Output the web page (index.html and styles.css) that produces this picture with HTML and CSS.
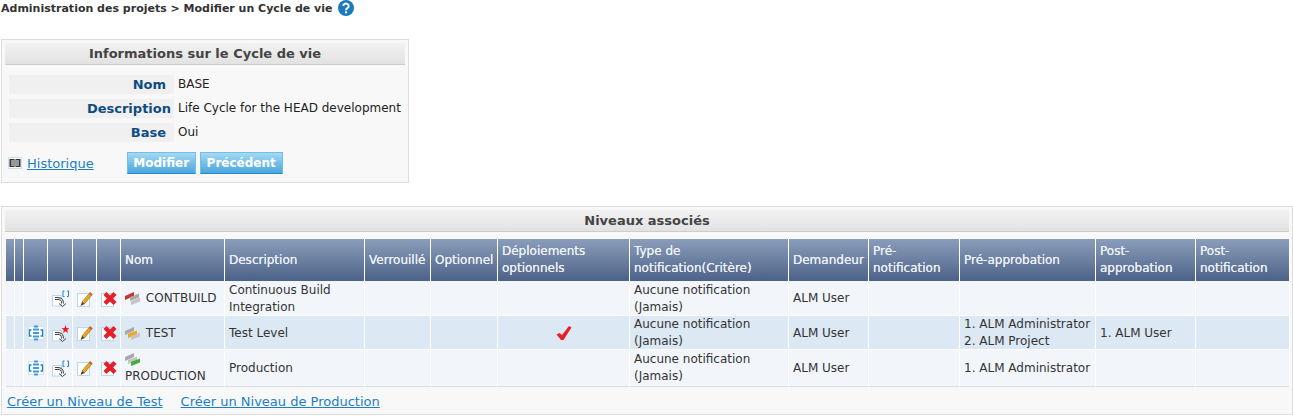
FILE: index.html
```html
<!DOCTYPE html>
<html>
  <head>
    <title>Modifier un Cycle de vie</title>
    <link rel="stylesheet" href="styles.css">
  </head>
  <body>

    <svg class="defs" width="0" height="0">
      <symbol id="page" viewBox="0 0 16 16">
        <rect x="0.5" y="2.5" width="12" height="13" fill="#fff" stroke="#bcd6ea"/>
      </symbol>
      <symbol id="arrow" viewBox="0 0 17 17">
        <rect x="0.5" y="5.500" width="9" height="10.500" fill="#fff" stroke="#bcd6ea"/>
        <path d="M3 8.500h3.500a4 4 0 0 1 4 4v1" fill="none" stroke="#444" stroke-width="2.800"/>
        <path d="M3 8.500h3.500a4 4 0 0 1 4 4v1.500" fill="none" stroke="#fff" stroke-width="1"/>
        <path d="M7 13.500 10.500 16.500 14 13.500" fill="none" stroke="#444" stroke-width="1"/>
      </symbol>
      <symbol id="move-open" viewBox="0 0 17 17">
        <use href="#arrow"/>
        <path d="M12.500 1h-1.500v5.500h1.500M15 1h1.500v5.500H15" fill="none" stroke="#1f83c6" stroke-width="1"/>
      </symbol>
      <symbol id="move-star" viewBox="0 0 17 17">
        <use href="#arrow"/>
        <path d="M13.500 0l1 3 3 .200-2.300 1.900.8 2.900-2.500-1.700L11 8l.8-2.900L9.500 3.200l3-.2z" fill="#ed1c24"/>
      </symbol>
      <symbol id="edit" viewBox="0 0 16 16">
        <use href="#page"/>
        <path d="M5 11 13 1.500l2.300 1.900-7.800 9.500z" fill="#e8a91c" stroke="#8f6414" stroke-width="0.6"/>
        <path d="M13 1.500l2.300 1.900-1.100 1.400-2.300-1.900z" fill="#d8553f"/>
        <path d="M5 11l2.500 1.900L3.500 15z" fill="#4a3b22"/>
      </symbol>
      <symbol id="delete" viewBox="0 0 16 16">
        <use href="#page"/>
        <path d="M4 2.500l10 10M14 2.500l-10 10" stroke="#e5202a" stroke-width="4.400" fill="none"/>
      </symbol>
      <symbol id="expand" viewBox="0 0 16 16">
        <rect x="0.500" y="1.500" width="15" height="13" fill="#fff" stroke="#d4e4f1"/>
        <path d="M3.500 5H1.500v6h2M12.500 5h2v6h-2" fill="none" stroke="#1f83c6" stroke-width="1.300"/>
        <path d="M6 1.500h4M5 4.500h6M5 8h6M5 11.500h6M6 14.500h4" stroke="#3d9bdb" stroke-width="2.200" fill="none"/>
      </symbol>
      <symbol id="check" viewBox="0 0 16 16">
        <path d="M0.500 9.500 3.500 8 6 10 13 1l2.500 1.500L7.500 15H5z" fill="#e8202a"/>
      </symbol>
      <symbol id="list" viewBox="0 0 14 14">
        <rect x="0.500" y="1.500" width="13" height="11" fill="#fff" stroke="#cfe0ee"/>
        <rect x="1.500" y="3" width="11" height="8" fill="#333"/>
        <path d="M7 3v8M3 5h3M8 5h3M3 7h3M8 7h3M3 9h3M8 9h3" stroke="#fff" fill="none"/>
      </symbol>
    </svg>

    <div class="breadcrumb">
      <span>Administration des projets &gt; Modifier un Cycle de vie</span>
      <svg class="help" viewBox="0 0 16 16">
        <circle cx="8" cy="8" r="8" fill="#1d79be"/>
        <path d="M5.300 6a2.700 2.400 0 1 1 4.200 2C8.500 8.700 8 9 8 10.300" fill="none" stroke="#fff" stroke-width="2"/>
        <rect x="7" y="11.300" width="2" height="2" fill="#fff"/>
      </svg>
    </div>

    <div class="box info-box">
      <div class="box-title">Informations sur le Cycle de vie</div>
      <div class="info-rows">
        <div class="info-row"><div class="info-label">Nom</div><div class="info-value">BASE</div></div>
        <div class="info-row"><div class="info-label info-label-long">Description</div><div class="info-value">Life Cycle for the HEAD development</div></div>
        <div class="info-row"><div class="info-label">Base</div><div class="info-value">Oui</div></div>
      </div>
      <div class="info-actions">
        <svg class="icon-list"><use href="#list"/></svg>
        <a class="link history-link" href="#">Historique</a>
        <button class="btn btn-edit">Modifier</button>
        <button class="btn btn-back">Précédent</button>
      </div>
    </div>

    <div class="box levels-box">
      <div class="box-title">Niveaux associés</div>
      <table class="levels">
        <thead>
          <tr>
            <th></th><th></th><th></th><th></th><th></th><th></th>
            <th>Nom</th>
            <th>Description</th>
            <th>Verrouillé</th>
            <th>Optionnel</th>
            <th>Déploiements optionnels</th>
            <th>Type de notification(Critère)</th>
            <th>Demandeur</th>
            <th>Pré-notification</th>
            <th>Pré-approbation</th>
            <th>Post-approbation</th>
            <th>Post-notification</th>
          </tr>
        </thead>
        <tbody>
          <tr>
            <td></td><td></td><td></td>
            <td class="icon-cell"><svg class="icon-move"><use href="#move-open"/></svg></td>
            <td class="icon-cell"><svg class="icon"><use href="#edit"/></svg></td>
            <td class="icon-cell"><svg class="icon"><use href="#delete"/></svg></td>
            <td>
              <svg class="icon-level" viewBox="0 0 16 13">
                <path d="M0 4 9 0v4L0 8z" fill="#c9342f"/><path d="M5 5l9-3.500v4L5 9z" fill="#a9a9a9"/><path d="M6 9l9-3.500v4L6 13z" fill="#c4c4c4"/>
              </svg>
              CONTBUILD
            </td>
            <td>Continuous Build Integration</td>
            <td></td><td></td><td></td>
            <td>Aucune notification (Jamais)</td>
            <td>ALM User</td>
            <td></td><td></td><td></td><td></td>
          </tr>
          <tr class="selected">
            <td></td><td></td>
            <td class="icon-cell"><svg class="icon"><use href="#expand"/></svg></td>
            <td class="icon-cell"><svg class="icon-move"><use href="#move-star"/></svg></td>
            <td class="icon-cell"><svg class="icon"><use href="#edit"/></svg></td>
            <td class="icon-cell"><svg class="icon"><use href="#delete"/></svg></td>
            <td>
              <svg class="icon-level" viewBox="0 0 16 13">
                <path d="M0 4 9 0v4L0 8z" fill="#a9a9a9"/><path d="M3 7l9-3.500v4L3 11z" fill="#f0a81e"/><path d="M6 9l9-3.500v4L6 13z" fill="#c4c4c4"/>
              </svg>
              TEST
            </td>
            <td>Test Level</td>
            <td></td><td></td>
            <td class="center"><svg class="icon"><use href="#check"/></svg></td>
            <td>Aucune notification (Jamais)</td>
            <td>ALM User</td>
            <td></td>
            <td>1. ALM Administrator<br>2. ALM Project</td>
            <td>1. ALM User</td>
            <td></td>
          </tr>
          <tr class="last">
            <td></td><td></td>
            <td class="icon-cell"><svg class="icon"><use href="#expand"/></svg></td>
            <td class="icon-cell"><svg class="icon-move"><use href="#move-open"/></svg></td>
            <td class="icon-cell"><svg class="icon"><use href="#edit"/></svg></td>
            <td class="icon-cell"><svg class="icon"><use href="#delete"/></svg></td>
            <td>
              <svg class="icon-level" viewBox="0 0 16 13">
                <path d="M0 4 9 0v4L0 8z" fill="#a9a9a9"/><path d="M3 7l9-3.500v4L3 11z" fill="#c4c4c4"/><path d="M6 9l9-3.500v4L6 13z" fill="#45ad3c"/>
              </svg>
              PRODUCTION
            </td>
            <td>Production</td>
            <td></td><td></td><td></td>
            <td>Aucune notification (Jamais)</td>
            <td>ALM User</td>
            <td></td>
            <td>1. ALM Administrator</td>
            <td></td><td></td>
          </tr>
        </tbody>
      </table>
      <div class="levels-links">
        <a class="link" href="#">Créer un Niveau de Test</a>
        <a class="link" href="#">Créer un Niveau de Production</a>
      </div>
    </div>

  </body>
</html>
```

FILE: styles.css
```css
body {
    margin: 0;
    padding: 0;
    background-color: white;
    font-family: "DejaVu Sans", sans-serif;
    font-size: 12px;
    color: #333333;
    overflow: hidden;
}

.defs {
    position: absolute;
}

.breadcrumb {
    display: flex;
    align-items: center;
    gap: 5px;
    height: 16px;
    padding: 0 1px;
    font-size: 11px;
    font-weight: bold;
}

.help {
    width: 16px;
    height: 16px;
}

.box {
    box-sizing: border-box;
    border: 1px solid #dddddd;
    background-color: #f8f8f8;
    padding: 3px;
}

.info-box {
    width: 408px;
    height: 144px;
    margin: 23px 0 0 1px;
}

.levels-box {
    width: 1292px;
    height: 209px;
    margin: 23px 0 0 1px;
}

.box-title {
    height: 22px;
    line-height: 21px;
    box-sizing: border-box;
    border-bottom: 1px solid #cccccc;
    background: linear-gradient(#f2f2f2, #e2e2e2);
    text-align: center;
    font-size: 13px;
    font-weight: bold;
    color: #444444;
}

.info-rows {
    display: flex;
    flex-direction: column;
    gap: 5px;
    padding: 10px 4px 0;
}

.info-row {
    display: flex;
    height: 19px;
    line-height: 19px;
}

.info-label {
    width: 165px;
    box-sizing: border-box;
    padding-right: 8px;
    background-color: #f0f0f0;
    text-align: right;
    font-size: 13px;
    font-weight: bold;
    color: #0f4c81;
}

.info-label-long {
    padding-right: 3px;
}

.info-value {
    padding-left: 4px;
    color: #222222;
}

.info-actions {
    display: flex;
    align-items: center;
    margin-top: 10px;
    padding-left: 3px;
}

.icon-list {
    width: 14px;
    height: 14px;
}

.link {
    font-size: 13px;
    color: #1b7fc4;
    text-decoration: underline;
}

.history-link {
    margin: 0 33px 0 5px;
}

.btn {
    box-sizing: border-box;
    height: 22px;
    margin-right: 4px;
    padding: 0;
    border: 1px solid #74bde6;
    border-bottom-color: #2b8ac6;
    background: linear-gradient(#a4d9f2, #4aa6de);
    color: white;
    font-family: "DejaVu Sans", sans-serif;
    font-size: 12px;
    font-weight: bold;
}

.btn-edit {
    width: 69px;
}

.btn-back {
    width: 83px;
}

.levels {
    table-layout: fixed;
    width: 1284px;
    margin: 7px 0 0 1px;
    border-collapse: separate;
    border-spacing: 0;
}

.levels th,
.levels td {
    box-sizing: border-box;
    padding: 0 4px;
    border-right: 1px solid white;
    line-height: 17px;
}

.levels th {
    height: 42px;
    background: linear-gradient(#8a9dbb, #4d6288);
    color: #eef2f7;
    font-weight: normal;
    text-align: left;
    text-shadow: 0 0 0.5px #eef2f7;
}

/* the 1px row line is a shadow so that two text lines still fit a 34px row */
.levels td {
    height: 34px;
    background-color: #f2f6fb;
    box-shadow: inset 0 -1px 0 white;
}

.levels tbody tr:first-child td {
    height: 35px;
}

.levels .selected td {
    background-color: #dce9f4;
}

.levels .last td {
    height: 37px;
    border-bottom: 1px solid #dddddd;
    box-shadow: none;
}

.levels th:nth-child(1), .levels th:nth-child(2) { width: 9px; padding: 0; }
.levels th:nth-child(3) { width: 24px; padding: 0; }
.levels th:nth-child(4) { width: 25px; padding: 0; }
.levels th:nth-child(5) { width: 24px; padding: 0; }
.levels th:nth-child(6) { width: 24px; padding: 0; }
.levels th:nth-child(7) { width: 104px; }
.levels th:nth-child(8) { width: 140px; }
.levels th:nth-child(9) { width: 66px; }
.levels th:nth-child(10) { width: 67px; }
.levels th:nth-child(11) { width: 132px; }
.levels th:nth-child(12) { width: 159px; }
.levels th:nth-child(13) { width: 80px; }
.levels th:nth-child(14) { width: 91px; }
.levels th:nth-child(15) { width: 136px; }
.levels th:nth-child(16) { width: 100px; }
.levels th:nth-child(17) { width: 94px; }

.levels td.icon-cell {
    padding: 0;
    text-align: center;
}

.levels td.center {
    text-align: center;
}

.icon {
    display: inline-block;
    width: 16px;
    height: 16px;
    vertical-align: middle;
}

.icon-move {
    display: inline-block;
    width: 17px;
    height: 17px;
    vertical-align: middle;
}

.icon-level {
    width: 16px;
    height: 13px;
    margin-right: 1px;
    vertical-align: middle;
}

.levels-links {
    display: flex;
    gap: 18px;
    padding: 7px 2px;
}
```
